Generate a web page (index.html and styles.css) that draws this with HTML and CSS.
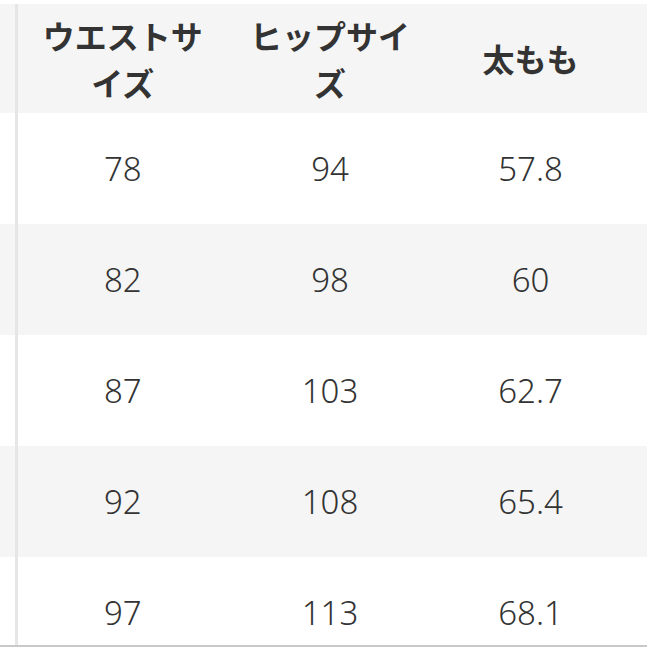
FILE: index.html
```html
<!DOCTYPE html>
<html lang="ja">
<head>
<meta charset="utf-8">
<link rel="stylesheet" href="styles.css">
</head>
<body>
<div class="frame">
<table class="size-table">
  <colgroup>
    <col class="c0"><col class="c1"><col class="c2"><col class="c3">
  </colgroup>
  <thead>
    <tr>
      <th class="edge"></th>
      <th>ウエストサイズ</th>
      <th>ヒップサイズ</th>
      <th class="last">太もも</th>
    </tr>
  </thead>
  <tbody>
    <tr><td class="edge"></td><td>78</td><td>94</td><td class="last">57.8</td></tr>
    <tr class="alt"><td class="edge"></td><td>82</td><td>98</td><td class="last">60</td></tr>
    <tr><td class="edge"></td><td>87</td><td>103</td><td class="last">62.7</td></tr>
    <tr class="alt"><td class="edge"></td><td>92</td><td>108</td><td class="last">65.4</td></tr>
    <tr><td class="edge"></td><td>97</td><td>113</td><td class="last">68.1</td></tr>
  </tbody>
</table>
</div>
</body>
</html>
```

FILE: styles.css
```css
html, body {
  margin: 0;
  padding: 0;
  background: #ffffff;
}
body {
  padding-top: 4px;
  width: 647px;
  height: 643px;
  overflow: hidden;
}
.frame {
  height: 641px;
  overflow: hidden;
  border-bottom: 2px solid #c9c9c9;
}
.size-table {
  width: 647px;
  table-layout: fixed;
  border-collapse: collapse;
  border-spacing: 0;
  font-family: "Noto Sans", "Noto Sans CJK JP", sans-serif;
  color: #333333;
}
.c0 { width: 16px; }
.c1 { width: 212px; }
.c2 { width: 204px; }
.c3 { width: 215px; }

.size-table th,
.size-table td {
  text-align: center;
  vertical-align: middle;
  padding: 0 16px;
}
.size-table th {
  height: 109px;
  background: #f5f5f5;
  font-family: "Noto Sans CJK JP", sans-serif;
  font-weight: 700;
  font-size: 32px;
  line-height: 47px;
  color: #333333;
}
.size-table td {
  height: 111px;
  font-size: 33px;
  font-weight: 300;
  color: #333333;
}
.size-table tr.alt td {
  background: #f5f5f5;
}
.size-table .edge {
  padding: 0;
  border-right: 3px solid #e6e6e6;
}
.size-table .last {
  padding: 0 18px 0 0;
}
```
